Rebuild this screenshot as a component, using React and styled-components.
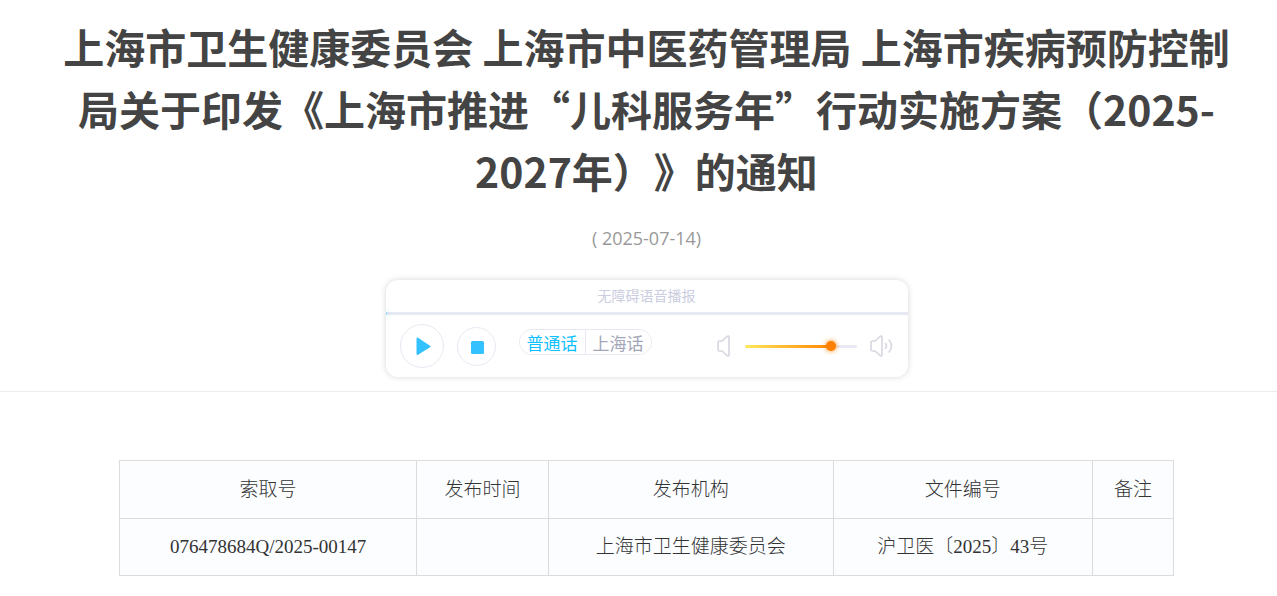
import React, { useState } from "react";
import styled, { createGlobalStyle } from "styled-components";

const GlobalStyle = createGlobalStyle`
  * {
    box-sizing: border-box;
  }

  body {
    margin: 0;
    background: #fff;
    color: #444;
    font-family: "Noto Sans CJK SC", sans-serif;
  }
`;

const Page = styled.main`
  width: 100%;
`;

const ArticleHead = styled.header`
  display: flex;
  flex-direction: column;
  align-items: center;
  padding: 15px 40px 14px 56px;
  border-bottom: 1px solid #ececec;
`;

const Title = styled.h1`
  margin: 0;
  font-size: 41px;
  line-height: 62px;
  font-weight: 700;
  text-align: center;
  text-spacing-trim: space-all;
  color: #444;
`;

const PublishDate = styled.p`
  margin: 24px 0 29px;
  font-family: "Open Sans", sans-serif;
  font-size: 18px;
  line-height: 26px;
  color: #999;
`;

const Player = styled.section`
  width: 522px;
  max-width: 100%;
  border-radius: 12px;
  background: #fff;
  box-shadow: 0 0 6px rgba(0, 0, 0, 0.16);
  overflow: hidden;
`;

const PlayerTitle = styled.div`
  height: 32px;
  font-size: 14px;
  line-height: 31px;
  text-align: center;
  color: #cbcde0;
`;

const ProgressTrack = styled.div`
  height: 3px;
  background: #e6e9f2;
`;

const ProgressFill = styled.div`
  min-width: 1px;
  height: 3px;
  background: #9fdcf8;
  box-shadow: 0 0 5px #31c2ff;
`;

const Controls = styled.div`
  display: flex;
  align-items: center;
  height: 62px;
  padding: 0 14px;
`;

const RoundButton = styled.button`
  display: flex;
  align-items: center;
  justify-content: center;
  flex: none;
  width: ${(props) => props.$size}px;
  height: ${(props) => props.$size}px;
  margin-right: ${(props) => props.$gap}px;
  padding: 0;
  border: 1px solid #e8e8f2;
  border-radius: 50%;
  background: #fff;
  color: #33c2ff;
  cursor: pointer;
`;

const Dialects = styled.div`
  display: flex;
  height: 26px;
  margin-bottom: 9px;
  border: 1px solid #e8e8f2;
  border-radius: 13px;
  overflow: hidden;
`;

const DialectButton = styled.button`
  box-sizing: content-box;
  width: 65px;
  padding: 0;
  border: none;
  background: #fff;
  font-family: inherit;
  font-size: 17px;
  line-height: 26px;
  color: ${(props) => (props.$active ? "#0fc0ff" : "#a3a5b8")};
  cursor: pointer;

  & + & {
    border-left: 1px solid #e8e8f2;
  }
`;

const Volume = styled.div`
  display: flex;
  align-items: center;
  gap: 13px;
  margin-left: auto;
  color: #d6d7e0;
`;

const VolumeSlider = styled.input`
  appearance: none;
  width: 112px;
  height: 3px;
  margin: 0;
  border-radius: 2px;
  outline: none;
  cursor: pointer;

  &::-webkit-slider-thumb {
    appearance: none;
    width: 10px;
    height: 10px;
    border-radius: 50%;
    background: #ff8000;
    box-shadow: 0 0 5px #ff8000;
  }
`;

const InfoSection = styled.section`
  padding: 68px 103px 20px 119px;
`;

const InfoTable = styled.table`
  width: 100%;
  table-layout: fixed;
  border-collapse: collapse;
  background: #fbfdff;
  font-family: "Liberation Serif", "Noto Sans CJK SC", serif;
  font-size: 19px;
  line-height: 28px;
  color: #333;
`;

const Col = styled.col`
  width: ${(props) => props.$width}%;
`;

const cell = `
  padding: 0;
  border: 1px solid #dcdcdc;
  font-weight: 300;
  text-align: center;
`;

const Th = styled.th`
  ${cell}
  height: 58px;
`;

const Td = styled.td`
  ${cell}
  height: 57px;
`;

const PlayIcon = () => (
  <svg width="20" height="18" viewBox="0 0 20 18" aria-hidden="true">
    <path
      d="M5.5 1.5 17.5 9.5 5.5 17Z"
      fill="currentColor"
      stroke="currentColor"
      strokeWidth="2"
      strokeLinejoin="round"
    />
  </svg>
);

const StopIcon = () => (
  <svg width="15" height="15" viewBox="0 0 15 15" aria-hidden="true">
    <rect x="2" y="2" width="13" height="13" rx="1.5" fill="currentColor" />
  </svg>
);

const SpeakerIcon = ({ waves }) => (
  <svg
    width={waves ? 24 : 15}
    height="22"
    viewBox={waves ? "0 0 24 22" : "0 0 15 22"}
    fill="none"
    stroke="currentColor"
    strokeWidth="1.6"
    strokeLinecap="round"
    strokeLinejoin="round"
    aria-hidden="true"
  >
    <path d="M2.5 6H5L10 1.5Q12 0.5 12 2V20Q12 21.5 10 20.5L5 16H2.5Q1 16 1 14.5V7.5Q1 6 2.5 6Z" />
    {waves && <path d="M15.5 8.5Q17.5 11 15.5 13.5M19 5Q24 11 19 17" />}
  </svg>
);

const columns = [
  { name: "索取号", width: 28.2 },
  { name: "发布时间", width: 12.5 },
  { name: "发布机构", width: 27 },
  { name: "文件编号", width: 24.6 },
  { name: "备注", width: 7.7 },
];

const record = [
  "076478684Q/2025-00147",
  "",
  "上海市卫生健康委员会",
  "沪卫医〔2025〕43号",
  "",
];

const dialects = ["普通话", "上海话"];

const App = () => {
  const [dialect, setDialect] = useState(dialects[0]);
  const [volume, setVolume] = useState(80);
  const [progress, setProgress] = useState(0);

  return (
    <>
      <GlobalStyle />
      <Page lang="zh-CN">
        <ArticleHead>
          <Title>
            上海市卫生健康委员会 上海市中医药管理局 上海市疾病预防控制局关于印发《上海市推进“儿科服务年”行动实施方案（2025-2027年）》的通知
          </Title>
          <PublishDate>( 2025-07-14)</PublishDate>

          <Player aria-label="无障碍语音播报">
            <PlayerTitle>无障碍语音播报</PlayerTitle>
            <ProgressTrack>
              <ProgressFill style={{ width: `${progress}%` }} />
            </ProgressTrack>
            <Controls>
              <RoundButton $size={44} $gap={13} aria-label="播放">
                <PlayIcon />
              </RoundButton>
              <RoundButton
                $size={39}
                $gap={23}
                aria-label="停止"
                onClick={() => setProgress(0)}
              >
                <StopIcon />
              </RoundButton>
              <Dialects>
                {dialects.map((name) => (
                  <DialectButton
                    key={name}
                    $active={name === dialect}
                    aria-pressed={name === dialect}
                    onClick={() => setDialect(name)}
                  >
                    {name}
                  </DialectButton>
                ))}
              </Dialects>
              <Volume>
                <SpeakerIcon />
                <VolumeSlider
                  type="range"
                  min="0"
                  max="100"
                  aria-label="音量"
                  value={volume}
                  onChange={(e) => setVolume(Number(e.target.value))}
                  style={{
                    background: `linear-gradient(to right, #ffe85c, #ff8000 ${volume}%, #e8e9f2 ${volume}%)`,
                  }}
                />
                <SpeakerIcon waves />
              </Volume>
            </Controls>
          </Player>
        </ArticleHead>

        <InfoSection>
          <InfoTable>
            <colgroup>
              {columns.map((column) => (
                <Col key={column.name} $width={column.width} />
              ))}
            </colgroup>
            <thead>
              <tr>
                {columns.map((column) => (
                  <Th key={column.name} scope="col">
                    {column.name}
                  </Th>
                ))}
              </tr>
            </thead>
            <tbody>
              <tr>
                {record.map((value, index) => (
                  <Td key={columns[index].name}>{value}</Td>
                ))}
              </tr>
            </tbody>
          </InfoTable>
        </InfoSection>
      </Page>
    </>
  );
};

export default App;
